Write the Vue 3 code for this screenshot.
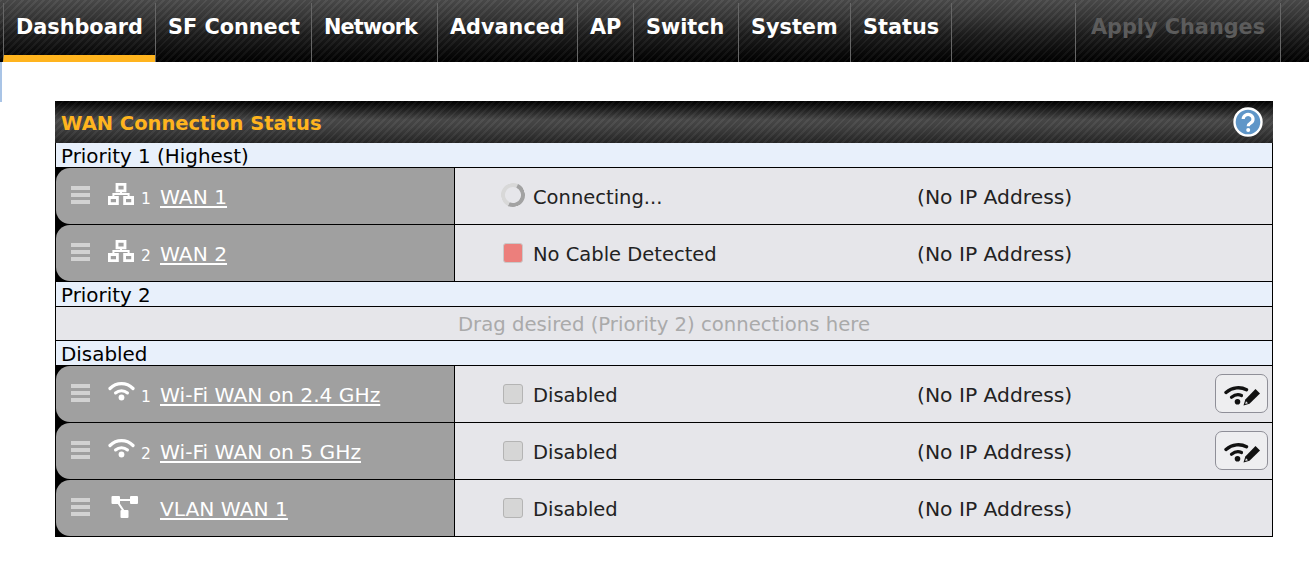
<script setup>
const tabs = [
  { name: 'Dashboard', width: 152, active: true },
  { name: 'SF Connect', width: 156 },
  { name: 'Network', width: 126, tight: true },
  { name: 'Advanced', width: 140 },
  { name: 'AP', width: 56 },
  { name: 'Switch', width: 105 },
  { name: 'System', width: 112 },
  { name: 'Status', width: 101 }
];

const sections = [
  {
    title: 'Priority 1 (Highest)',
    rows: [
      { icon: 'net', num: 1, name: 'WAN 1', state: 'spin', status: 'Connecting...' },
      { icon: 'net', num: 2, name: 'WAN 2', state: 'red', status: 'No Cable Detected' }
    ]
  },
  {
    title: 'Priority 2',
    empty: 'Drag desired (Priority 2) connections here',
    rows: []
  },
  {
    title: 'Disabled',
    rows: [
      { icon: 'wifi', num: 1, name: 'Wi-Fi WAN on 2.4 GHz', state: 'off', status: 'Disabled', edit: true },
      { icon: 'wifi', num: 2, name: 'Wi-Fi WAN on 5 GHz', state: 'off', status: 'Disabled', edit: true },
      { icon: 'vlan', num: '', name: 'VLAN WAN 1', state: 'off', status: 'Disabled' }
    ]
  }
];
</script>

<template>
  <div class="page">
    <nav class="topbar">
      <a
        v-for="tab in tabs"
        :key="tab.name"
        class="tab"
        :class="{ active: tab.active, tight: tab.tight }"
        :style="{ width: tab.width + 'px' }"
      >{{ tab.name }}</a>
      <span class="tab filler"></span>
      <a class="tab apply">Apply Changes</a>
      <span class="tab end"></span>
    </nav>

    <main class="content">
      <div class="strip"></div>
      <section class="panel">
        <header class="panel-head">
          <h2>WAN Connection Status</h2>
          <svg class="help" viewBox="0 0 30 30" width="30" height="30">
            <circle cx="15" cy="15" r="13.5" fill="#5f96c8" stroke="#fff" stroke-width="2.4" />
            <path d="M10.2 12a4.9 4.6 0 1 1 7.6 3.9c-1.7 1.1-2.6 1.800-2.600 3.400" fill="none" stroke="#fff" stroke-width="3.200" />
            <circle cx="15.200" cy="23" r="2" fill="#fff" />
          </svg>
        </header>

        <div class="panel-body">
          <template v-for="section in sections" :key="section.title">
            <div class="section-title">{{ section.title }}</div>
            <div v-if="section.empty" class="drop">{{ section.empty }}</div>
            <div v-for="row in section.rows" :key="row.name" class="row">
              <div class="row-left">
                <span class="handle"><i></i><i></i><i></i></span>
                <span class="conn-icon">
                  <svg v-if="row.icon === 'net'" viewBox="0 0 26 22" width="26" height="22">
                    <path d="M9 1.400h8v6.400H9z M1.400 14.500h8v6.100h-8z M16.600 14.500h8v6.100h-8z" fill="none" stroke="#fff" stroke-width="2.800" />
                    <path d="M13 8v3 M5.400 14v-3h15.200v3" fill="none" stroke="#fff" stroke-width="2" />
                  </svg>
                  <svg v-else-if="row.icon === 'wifi'" class="wifi-svg" viewBox="0 0 27 20" width="27" height="20">
                    <path d="M2 7.500c6.500-6.500 16.500-6.500 23 0" fill="none" stroke="#fff" stroke-width="3.200" stroke-linecap="round" />
                    <path d="M7.500 12c3.500-3 8.500-3 12 0" fill="none" stroke="#fff" stroke-width="3" stroke-linecap="round" />
                    <circle cx="13.500" cy="16.500" r="2.900" fill="#fff" />
                  </svg>
                  <svg v-else class="vlan-svg" viewBox="0 0 28 24" width="28" height="24">
                    <path d="M5 5h18 M6 6l8 12" fill="none" stroke="#fff" stroke-width="2" />
                    <rect x="0.500" y="1" width="8.500" height="8" rx="1" fill="#fff" />
                    <rect x="19" y="1" width="8" height="8" rx="1" fill="#fff" />
                    <rect x="9.500" y="15" width="8" height="8" rx="1" fill="#fff" />
                  </svg>
                </span>
                <span class="num">{{ row.num }}</span>
                <a class="conn-name">{{ row.name }}</a>
              </div>
              <div class="row-right">
                <span class="state" :class="row.state"></span>
                <span class="status">{{ row.status }}</span>
                <span class="ip">(No IP Address)</span>
                <button v-if="row.edit" class="edit">
                  <svg viewBox="0 0 36 24" width="36" height="24">
                    <path d="M2 10.500c6.500-5.500 14.500-6 20.500-2.800" fill="none" stroke="#111" stroke-width="3.400" stroke-linecap="round" />
                    <path d="M7.500 15.200c3.500-2.700 7-3 10-1.700" fill="none" stroke="#111" stroke-width="3.200" stroke-linecap="round" />
                    <circle cx="13.500" cy="19.800" r="2.800" fill="#111" />
                    <path d="M19.500 23.500l1.800-6L31.500 7l4.500 4.500L25.500 21.800z" fill="#111" />
                    <path d="M21.200 22l.8-2.800 2 2z" fill="#e6e6ea" />
                  </svg>
                </button>
              </div>
            </div>
          </template>
        </div>
      </section>
    </main>
  </div>
</template>

<style>
html,
body {
  margin: 0;
  background: #fff;
}
</style>

<style scoped>
.page {
  width: 1309px;
  height: 562px;
  overflow: hidden;
  font-family: "DejaVu Sans", Verdana, sans-serif;
}

.topbar {
  display: flex;
  height: 62px;
  padding-left: 3px;
  box-sizing: border-box;
  background:
    repeating-linear-gradient(135deg, rgba(255, 255, 255, 0.045) 0 2px, rgba(0, 0, 0, 0.06) 2px 5px),
    linear-gradient(#4c4c4c, #3a3a3a 25%, #1e1e1e 55%, #000);
}

.tab {
  box-sizing: border-box;
  flex: none;
  height: 59px;
  margin-top: 3px;
  padding-left: 12px;
  border-left: 1px solid #666;
  color: #fff;
  font-size: 20.8px;
  font-weight: bold;
  line-height: 49px;
  white-space: nowrap;
}

.tab.tight {
  letter-spacing: -0.85px;
}

.tab.active {
  border-bottom: 7px solid #ffb41e;
}

.filler {
  width: 124px;
}

.apply {
  width: 205px;
  padding-left: 15px;
  color: #5c5c5c;
}

.end {
  width: 29px;
  padding: 0;
}

.content {
  display: flex;
  align-items: flex-start;
}

.strip {
  width: 2px;
  height: 40px;
  margin-right: 53px;
  background: #a9c4e6;
}

.panel {
  width: 1218px;
  margin-top: 39px;
}

.panel-head {
  display: flex;
  align-items: center;
  justify-content: space-between;
  height: 42px;
  padding: 0 10px 0 6px;
  box-sizing: border-box;
  background:
    repeating-linear-gradient(135deg, rgba(255, 255, 255, 0.04) 0 2px, rgba(0, 0, 0, 0.06) 2px 5px),
    linear-gradient(#000, #4a4a4a 45%, #444 60%, #262626);
}

.panel-head h2 {
  margin: 2px 0 0;
  color: #ffb41e;
  font-size: 19.5px;
  font-weight: bold;
}

.help {
  display: block;
}

.panel-body {
  border-right: 1px solid #000;
  border-left: 1px solid #000;
  border-bottom: 1px solid #000;
  background: #000;
}

.section-title {
  height: 24px;
  padding-left: 5px;
  border-bottom: 1px solid #000;
  background: #e8f0fb;
  color: #000;
  font-size: 19.9px;
  line-height: 28px;
}

.drop {
  height: 33px;
  border-bottom: 1px solid #000;
  background: #e6e6ea;
  color: #aaa;
  font-size: 19.67px;
  line-height: 36px;
  text-align: center;
}

/* the black body shows through behind the rounded corners */
.row {
  display: grid;
  grid-template-columns: 399px 1fr;
  height: 56px;
  border-bottom: 1px solid #000;
  background: #000;
}

.row:last-child {
  border-bottom: none;
}

.row-left {
  display: flex;
  align-items: center;
  padding-left: 15px;
  border-right: 1px solid #000;
  border-radius: 14px 0 0 14px;
  background: #a0a0a0;
}

.row-right {
  position: relative;
  display: flex;
  align-items: center;
  padding-left: 48px;
  background: #e6e6ea;
  color: #222;
  font-size: 19.5px;
}

.handle {
  display: flex;
  flex-direction: column;
  gap: 3px;
  width: 19px;
  margin-top: -2px;
}

.handle i {
  display: block;
  height: 4px;
  background: #d2d2d2;
}

.conn-icon {
  display: flex;
  flex: none;
  width: 26px;
  margin-left: 18px;
  margin-top: -4px;
}

.wifi-svg {
  flex: none;
  margin-top: -2px;
}

.vlan-svg {
  flex: none;
  margin: 2px 0 0 3px;
}

.num {
  flex: none;
  width: 12px;
  margin-left: 7px;
  margin-top: 5px;
  color: #fff;
  font-size: 15.5px;
}

.conn-name {
  margin: 2px 0 0 7px;
  color: #fff;
  font-size: 20.2px;
  text-decoration: underline;
  text-underline-offset: 2px;
}

.state {
  flex: none;
  box-sizing: border-box;
  width: 20px;
  height: 20px;
  border-radius: 3px;
}

.state.red {
  background: #ec7f7c;
  border: 1px solid #c9c9c9;
}

.state.off {
  background: #d6d6d6;
  border: 1px solid #b4b4b4;
}

.state.spin {
  width: 24px;
  height: 24px;
  margin: 0 0 3px -2px;
  border: 4px solid #d8d8d8;
  border-right-color: #a2a2a2;
  border-bottom-color: #a2a2a2;
  border-radius: 50%;
  transform: rotate(-20deg);
}

.status {
  flex: none;
  width: 384px;
  margin: 2px 0 0 10px;
}

.state.spin + .status {
  margin-left: 8px;
}

.ip {
  margin-top: 2px;
  font-size: 20.3px;
  white-space: nowrap;
}

.edit {
  position: absolute;
  right: 4px;
  top: 8px;
  display: flex;
  align-items: center;
  justify-content: center;
  box-sizing: border-box;
  width: 53px;
  height: 39px;
  padding: 0;
  border: 1px solid #8f8f98;
  border-radius: 7px;
  background: #eeeeF0;
}
</style>
